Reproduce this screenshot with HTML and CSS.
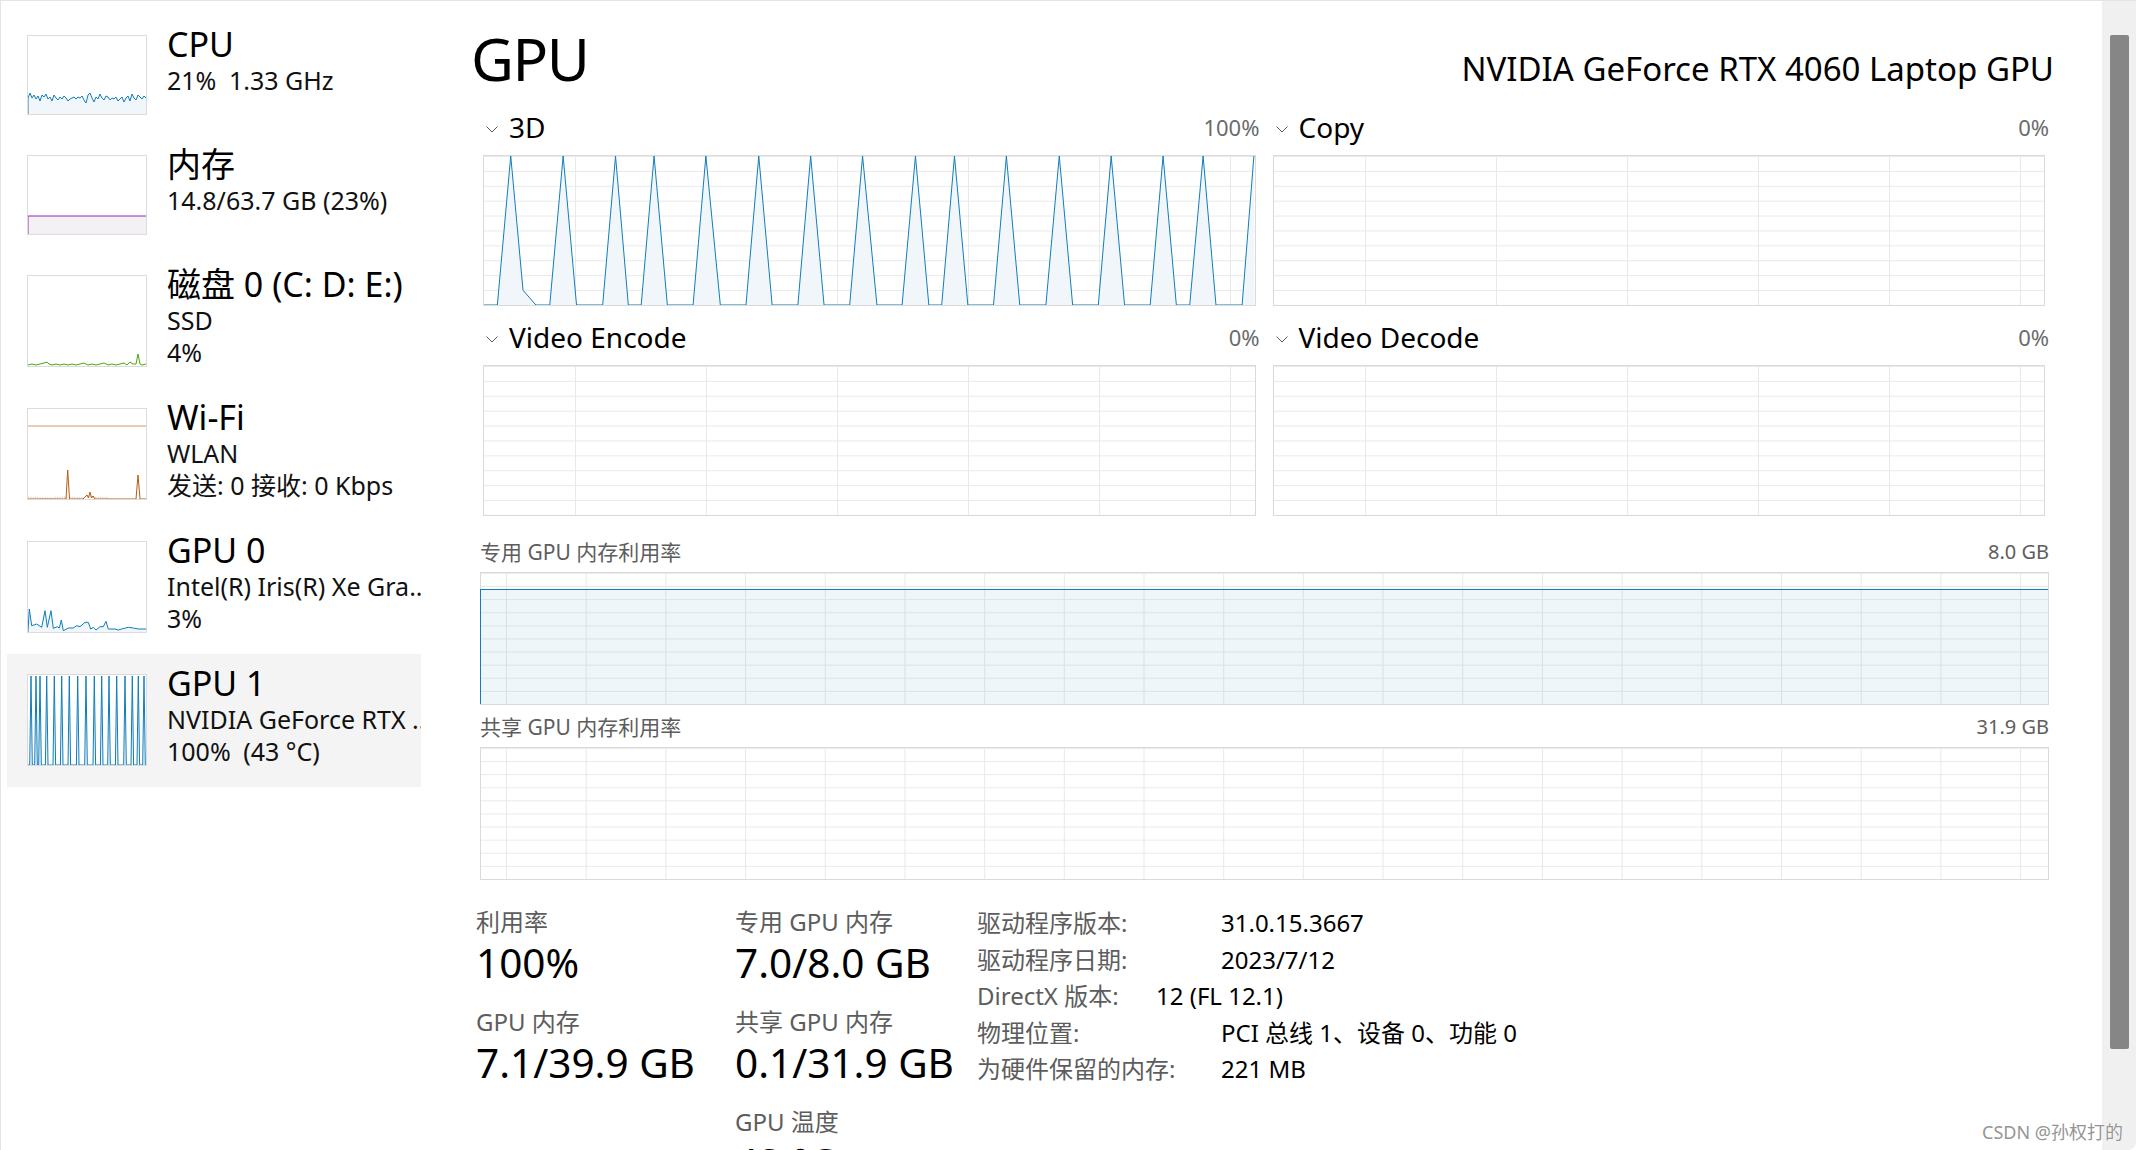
FILE: index.html
```html
<!DOCTYPE html>
<html lang="zh-CN">
<head>
<meta charset="utf-8">
<title>任务管理器 - 性能 - GPU</title>
<link rel="stylesheet" href="styles.css">
</head>
<body>
<div class="window">
  <nav class="sidebar">
    <div class="item">
      <div class="thumb"><svg viewBox="0 0 118 78" preserveAspectRatio="none"><polygon class="fill-blue" points="0,78 0,62 2,57 4,62 6,59 8,63 10,60 12,65 14,59 16,61 18,58 20,63 22,61 24,65 26,59 28,62 30,64 32,61 34,63 36,60 38,62 40,65 42,63 44,62 46,61 48,63 50,61 52,62 54,60 56,64 58,67 60,59 62,57 64,62 66,66 68,61 70,63 72,58 74,62 76,64 78,60 80,61 82,64 84,62 86,63 88,61 90,65 92,63 94,61 96,66 98,62 100,60 102,65 104,58 106,62 108,64 110,59 112,61 114,63 116,60 118,62 118,78"/><polyline class="ln-blue" points="0,78 0,62 2,57 4,62 6,59 8,63 10,60 12,65 14,59 16,61 18,58 20,63 22,61 24,65 26,59 28,62 30,64 32,61 34,63 36,60 38,62 40,65 42,63 44,62 46,61 48,63 50,61 52,62 54,60 56,64 58,67 60,59 62,57 64,62 66,66 68,61 70,63 72,58 74,62 76,64 78,60 80,61 82,64 84,62 86,63 88,61 90,65 92,63 94,61 96,66 98,62 100,60 102,65 104,58 106,62 108,64 110,59 112,61 114,63 116,60 118,62"/></svg></div>
      <div class="info"><div class="name">CPU</div><div class="sub">21%&ensp;1.33 GHz</div></div>
    </div>
    <div class="item">
      <div class="thumb"><svg viewBox="0 0 118 78" preserveAspectRatio="none"><polygon class="fill-purple" points="0,78 0,60 118,60 118,78"/><polyline class="ln-purple" points="0,78 0,60 118,60"/></svg></div>
      <div class="info"><div class="name">内存</div><div class="sub">14.8/63.7 GB (23%)</div></div>
    </div>
    <div class="item tall">
      <div class="thumb"><svg viewBox="0 0 118 90" preserveAspectRatio="none"><polyline class="ln-green" points="0,89 4,88 8,89 12,88 16,87 19,86 21,88 24,89 28,88 32,89 36,88 40,89 44,88 48,89 52,88 56,87 60,89 64,88 68,89 72,88 76,87 80,89 84,88 88,89 92,88 96,87 99,89 102,86 105,88 108,88 110,78 112,88 114,89 118,88"/></svg></div>
      <div class="info"><div class="name">磁盘 0 (C: D: E:)</div><div class="sub">SSD</div><div class="sub">4%</div></div>
    </div>
    <div class="item tall">
      <div class="thumb"><svg viewBox="0 0 118 90" preserveAspectRatio="none"><polyline class="ln-orange-top" points="0,17 118,17"/><polyline class="ln-orange-dot" points="0,89 3,88 6,89 9,88 12,89 26,89 28,88 30,89 33,88 52,89 54,88 56,89 58,87 72,89 74,88 76,89 78,88 80,89"/><polyline class="ln-orange" points="0,90 38,90 39.7,61 41.5,90 55,90 57,88 59,86 60.5,89 62,83 63.5,89 65,87 67,90 108,90 110,66 112,90 118,90"/></svg></div>
      <div class="info"><div class="name">Wi-Fi</div><div class="sub">WLAN</div><div class="sub">发送: 0 接收: 0 Kbps</div></div>
    </div>
    <div class="item tall">
      <div class="thumb"><svg viewBox="0 0 118 90" preserveAspectRatio="none"><polygon class="fill-blue" points="0,90 0,88.7 1.3,67 3.7,83.7 8.7,82 13.7,85.3 17,68.7 19.3,85.3 23,68.7 25.3,86.3 29.3,84.7 31.3,86 33.3,78 35.3,88.7 40.3,86 45.3,86 48.7,83.7 52,84.7 57,80.3 60.3,80.3 62.7,87 65.3,85.3 68,88 72,84.7 75.3,84.7 78,79.3 80.3,87 87,87 90.3,88 93.7,87 100.3,85.3 105.3,86 110.3,87 118,87 118,90"/><polyline class="ln-blue" points="0,90 0,88.7 1.3,67 3.7,83.7 8.7,82 13.7,85.3 17,68.7 19.3,85.3 23,68.7 25.3,86.3 29.3,84.7 31.3,86 33.3,78 35.3,88.7 40.3,86 45.3,86 48.7,83.7 52,84.7 57,80.3 60.3,80.3 62.7,87 65.3,85.3 68,88 72,84.7 75.3,84.7 78,79.3 80.3,87 87,87 90.3,88 93.7,87 100.3,85.3 105.3,86 110.3,87 118,87"/></svg></div>
      <div class="info"><div class="name">GPU 0</div><div class="sub clip">Intel(R) Iris(R) Xe Gra...</div><div class="sub">3%</div></div>
    </div>
    <div class="item tall selected">
      <div class="thumb"><svg viewBox="0 0 118 90" preserveAspectRatio="none"><polygon class="fill-blue" points="0,90 1.7,90 3,1 4.3,90 6.7,90 8,1 9.3,90 10.7,90 12,1 13.3,90 17.4,90 18.7,1 20,90 25,90 26.3,1 27.6,90 32.4,90 33.7,1 35,90 40,90 41.3,1 42.6,90 48.4,90 49.7,1 51,90 56.7,90 58,1 59.3,90 65,90 66.3,1 67.6,90 72.4,90 73.7,1 75,90 79.7,90 81,1 82.3,90 87.4,90 88.7,1 90,90 95.7,90 97,1 98.3,90 103,90 104.3,1 105.6,90 109,90 110.3,1 111.6,90 114.7,90 116,1 117.3,90 118,90"/><polyline class="ln-blue" points="0,90 1.7,90 3,1 4.3,90 6.7,90 8,1 9.3,90 10.7,90 12,1 13.3,90 17.4,90 18.7,1 20,90 25,90 26.3,1 27.6,90 32.4,90 33.7,1 35,90 40,90 41.3,1 42.6,90 48.4,90 49.7,1 51,90 56.7,90 58,1 59.3,90 65,90 66.3,1 67.6,90 72.4,90 73.7,1 75,90 79.7,90 81,1 82.3,90 87.4,90 88.7,1 90,90 95.7,90 97,1 98.3,90 103,90 104.3,1 105.6,90 109,90 110.3,1 111.6,90 114.7,90 116,1 117.3,90 118,90"/></svg></div>
      <div class="info"><div class="name">GPU 1</div><div class="sub clip">NVIDIA GeForce RTX ...</div><div class="sub">100%&ensp;(43 °C)</div></div>
    </div>
  </nav>

  <main class="main">
    <header class="head">
      <h1 class="title">GPU</h1>
      <div class="model">NVIDIA GeForce RTX 4060 Laptop GPU</div>
    </header>

    <section class="engines">
      <div class="engine">
        <div class="engine-head">
          <svg class="chev" viewBox="0 0 12 7"><path d="M0.5 0.5 L6 6 L11.5 0.5" /></svg>
          <span class="engine-name">3D</span>
          <span class="engine-pct">100%</span>
        </div>
        <div class="chart engine-chart">
          <svg viewBox="0 0 772 151" preserveAspectRatio="none">
            <polygon class="fill-blue" points="0,151 13.4,151 26.8,0 39.1,136 52,151 65.9,151 79.3,0 92.7,151 118.9,151 131.8,0 144.6,151 157.5,151 170.4,0 183.7,151 209.5,151 222.3,0 236.8,151 262.5,151 275.3,0 288.7,151 314.5,151 327.3,0 340.7,151 366.4,151 379.3,0 393.7,151 418.9,151 432.3,0 445.7,151 458.6,151 471.4,0 484.8,151 510.5,151 523.4,0 536.8,151 563,151 576.4,0 589.8,151 615.5,151 628.4,0 641.8,151 667.5,151 680.4,0 693.7,151 707.1,151 720.5,0 733.4,151 759.6,151 771.4,0 772,151"/>
            <polyline class="ln-blue" points="0,151 13.4,151 26.8,0 39.1,136 52,151 65.9,151 79.3,0 92.7,151 118.9,151 131.8,0 144.6,151 157.5,151 170.4,0 183.7,151 209.5,151 222.3,0 236.8,151 262.5,151 275.3,0 288.7,151 314.5,151 327.3,0 340.7,151 366.4,151 379.3,0 393.7,151 418.9,151 432.3,0 445.7,151 458.6,151 471.4,0 484.8,151 510.5,151 523.4,0 536.8,151 563,151 576.4,0 589.8,151 615.5,151 628.4,0 641.8,151 667.5,151 680.4,0 693.7,151 707.1,151 720.5,0 733.4,151 759.6,151 771.4,0"/>
          </svg>
        </div>
      </div>
      <div class="engine">
        <div class="engine-head">
          <svg class="chev" viewBox="0 0 12 7"><path d="M0.5 0.5 L6 6 L11.5 0.5" /></svg>
          <span class="engine-name">Copy</span>
          <span class="engine-pct">0%</span>
        </div>
        <div class="chart engine-chart"></div>
      </div>
      <div class="engine">
        <div class="engine-head">
          <svg class="chev" viewBox="0 0 12 7"><path d="M0.5 0.5 L6 6 L11.5 0.5" /></svg>
          <span class="engine-name">Video Encode</span>
          <span class="engine-pct">0%</span>
        </div>
        <div class="chart engine-chart"></div>
      </div>
      <div class="engine">
        <div class="engine-head">
          <svg class="chev" viewBox="0 0 12 7"><path d="M0.5 0.5 L6 6 L11.5 0.5" /></svg>
          <span class="engine-name">Video Decode</span>
          <span class="engine-pct">0%</span>
        </div>
        <div class="chart engine-chart"></div>
      </div>
    </section>

    <section class="mem">
      <div class="mem-head"><span>专用 GPU 内存利用率</span><span>8.0 GB</span></div>
      <div class="chart mem-chart"><div class="mem-fill" style="height:87.5%"></div></div>
      <div class="mem-head mem-head2"><span>共享 GPU 内存利用率</span><span>31.9 GB</span></div>
      <div class="chart mem-chart"></div>
    </section>

    <section class="stats">
      <div class="stat-col c1">
        <div class="stat"><div class="stat-label">利用率</div><div class="stat-value">100%</div></div>
        <div class="stat"><div class="stat-label">GPU 内存</div><div class="stat-value">7.1/39.9 GB</div></div>
      </div>
      <div class="stat-col c2">
        <div class="stat"><div class="stat-label">专用 GPU 内存</div><div class="stat-value">7.0/8.0 GB</div></div>
        <div class="stat"><div class="stat-label">共享 GPU 内存</div><div class="stat-value">0.1/31.9 GB</div></div>
        <div class="stat"><div class="stat-label">GPU 温度</div><div class="stat-value">43 °C</div></div>
      </div>
      <dl class="details">
        <div class="drow"><dt>驱动程序版本:</dt><dd>31.0.15.3667</dd></div>
        <div class="drow"><dt>驱动程序日期:</dt><dd>2023/7/12</dd></div>
        <div class="drow dx"><dt>DirectX 版本:</dt><dd>12 (FL 12.1)</dd></div>
        <div class="drow"><dt>物理位置:</dt><dd>PCI 总线 1、设备 0、功能 0</dd></div>
        <div class="drow"><dt>为硬件保留的内存:</dt><dd>221 MB</dd></div>
      </dl>
    </section>
  </main>

  <div class="scrollbar"><div class="scroll-thumb"></div></div>
  <div class="watermark">CSDN @孙权打的</div>
</div>
</body>
</html>
```

FILE: styles.css
```css
* { box-sizing: border-box; margin: 0; padding: 0; }

html, body {
  width: 2136px;
  height: 1150px;
  overflow: hidden;
  background: #ffffff;
}

body {
  font-family: "Noto Sans", "Noto Sans CJK SC", sans-serif;
  color: #000000;
}

.window {
  position: relative;
  display: flex;
  width: 2136px;
  height: 1150px;
  border-top: 1px solid #e4e4e4;
  border-left: 1px solid #e4e4e4;
}

/* ---------- sidebar ---------- */
.sidebar {
  flex: none;
  width: 420px;
  padding: 14px 0 0 6px;
}

.item {
  display: flex;
  align-items: flex-start;
  height: 120px;
  padding: 10px 0 0 20px;
}
.item.tall { height: 133px; }
.item.selected { background: #f4f4f4; }

.thumb {
  flex: none;
  width: 120px;
  height: 80px;
  margin-top: 10px;
  border: 1px solid #dcdcdc;
  background: #ffffff;
}
.item.tall .thumb { height: 92px; }
.thumb svg { display: block; width: 100%; height: 100%; }

.info {
  flex: 1;
  min-width: 0;
  margin-left: 20px;
  white-space: nowrap;
}
.name { font-size: 34px; line-height: 39px; color: #000; }
.sub {
  font-size: 25px;
  line-height: 32px;
  color: #111;
}
.sub.clip { overflow: hidden; }

/* chart strokes */
.ln-blue, .ln-purple, .ln-green, .ln-orange, .ln-orange-top, .ln-orange-dot {
  fill: none;
  stroke-width: 1;
  vector-effect: non-scaling-stroke;
  stroke-linejoin: miter;
}
.ln-blue { stroke: #117dbb; }
.fill-blue { fill: #f1f6fa; stroke: none; }
.ln-purple { stroke: #9528b4; }
.fill-purple { fill: #f3f1f4; stroke: none; }
.ln-green { stroke: #4da60c; }
.ln-orange { stroke: #b25d13; }
.ln-orange-top { stroke: #d09870; }
.ln-orange-dot { stroke: #e3b08c; stroke-dasharray: 1 1.5; }

/* ---------- main ---------- */
.main {
  flex: 1;
  min-width: 0;
  padding: 22px 53px 0 59px;
}

.head {
  display: flex;
  justify-content: space-between;
  align-items: baseline;
  height: 70px;
}
.title {
  font-size: 59px;
  font-weight: 400;
  line-height: 70px;
  letter-spacing: -1.5px;
  margin-left: -9px;
}
.model {
  font-size: 33px;
  line-height: 70px;
  margin-right: -5px;
}

.engines {
  display: grid;
  grid-template-columns: 1fr 1fr;
  column-gap: 17px;
  row-gap: 13px;
  margin: 16px 4px 0 3px;
}

.engine-head {
  display: flex;
  align-items: center;
  height: 36px;
  line-height: 36px;
  padding-left: 3px;
}
.chev {
  flex: none;
  width: 12px;
  height: 7px;
  margin-top: 5px;
}
.chev path { fill: none; stroke: #5a5a5a; stroke-width: 1; }
.engine-name { font-size: 28px; margin-left: 11px; }
.engine-pct {
  margin-left: auto;
  margin-right: -4px;
  font-size: 22px;
  color: #6b6b6b;
}

.chart {
  border: 1px solid #dadada;
  background-color: #ffffff;
  background-image:
    linear-gradient(to right, #e9e9e9 1px, transparent 1px),
    linear-gradient(to bottom, #e9e9e9 1px, transparent 1px);
}
.engine-chart {
  height: 151px;
  margin-top: 10px;
  background-size: 131px 100%, 100% 10%;
  background-position: 91px 0, 0 0;
}
.engine-chart svg { display: block; width: 100%; height: 100%; }

.mem { margin-top: 23px; }
.mem-head {
  display: flex;
  justify-content: space-between;
  font-size: 21px;
  line-height: 26px;
  color: #5d5d5d;
}
.mem-head span:last-child { font-size: 20px; }
.mem-head2 { margin-top: 9px; }
.mem-chart {
  display: flex;
  flex-direction: column;
  justify-content: flex-end;
  height: 133px;
  margin-top: 7px;
  background-size: 79.7px 100%, 100% 10%;
  background-position: 25px 0, 0 0;
}
.mem-fill {
  margin-left: -1px;
  border-top: 1px solid #117dbb;
  border-left: 1px solid #117dbb;
  background: rgba(17, 125, 187, 0.07);
}

.stats {
  display: flex;
  align-items: flex-start;
  margin: 27px 0 0 -4px;
}
.stat-col.c1 { flex: none; width: 259px; }
.stat-col.c2 { flex: none; width: 242px; }
.stat + .stat { margin-top: 19px; }
.stat-label { font-size: 24px; line-height: 30px; color: #5d5d5d; white-space: nowrap; }
.stat-value { font-size: 40.5px; line-height: 51px; white-space: nowrap; }

.details {
  margin-top: -2px;
  font-size: 24px;
  line-height: 36.5px;
}
.drow { display: flex; white-space: nowrap; }
.drow dt { flex: none; width: 244px; color: #5d5d5d; }
.drow.dx dt { width: 179px; }
.drow dd { color: #000; }

/* ---------- scrollbar ---------- */
.scrollbar {
  flex: none;
  width: 34px;
  padding: 34px 0 0 8px;
  background: #f0f0f0;
  border-bottom-right-radius: 8px;
}
.scroll-thumb {
  width: 19px;
  height: 1014px;
  background: #868686;
  border-radius: 2px;
}

.watermark {
  position: absolute;
  right: 13px;
  bottom: 8px;
  font-size: 18px;
  line-height: 20px;
  color: #959595;
  text-shadow: 0 0 2px #ffffff, 0 0 1px #ffffff;
}
```
